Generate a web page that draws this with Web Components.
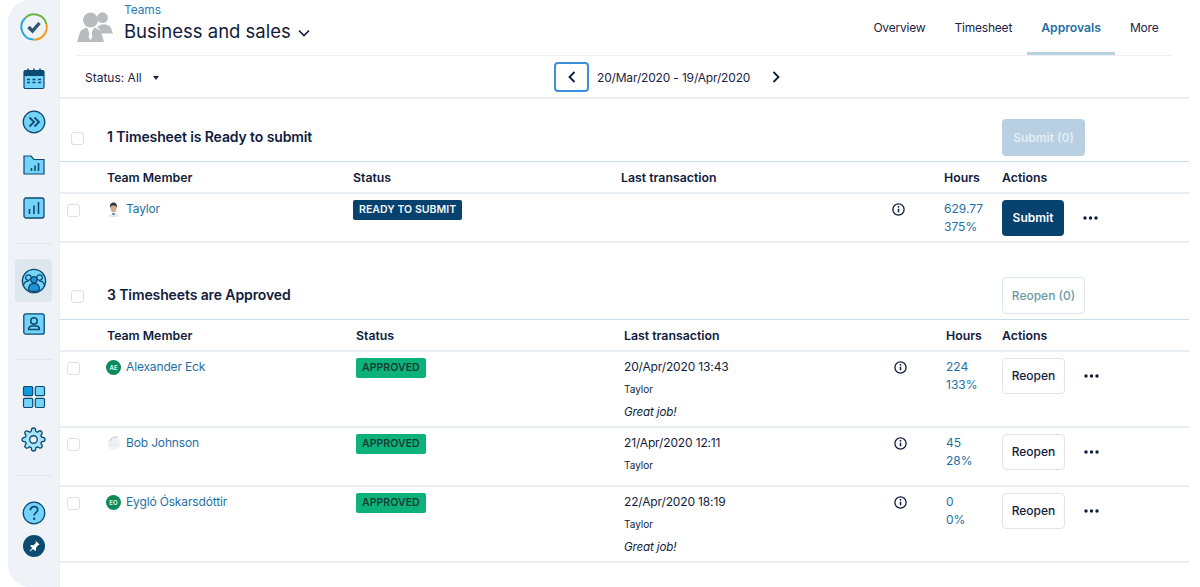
<!DOCTYPE html>
<html>
<head>
<meta charset="utf-8">
<title>Approvals</title>
<style>
  html, body { margin: 0; background: #fff; }
  body { font-family: Inter, "Liberation Sans", sans-serif; color: #111c3d; height: 587px; overflow: hidden; }
  #app { display: flex; height: 587px; padding-left: 8px; box-sizing: border-box; }
</style>
</head>
<body>
<div id="app">
  <app-sidebar></app-sidebar>
  <app-main>
    <page-header></page-header>
    <filter-bar></filter-bar>
    <sheet-section first title="1 Timesheet is Ready to submit" action="Submit (0)" kind="submit-off" cols="246px 268px 271px 52px 58px 1fr">
      <sheet-row name="Taylor" avatar="taylor" status="READY TO SUBMIT" tone="navy" hours="629.77" pct="375%" action="Submit" primary></sheet-row>
    </sheet-section>
    <sheet-section title="3 Timesheets are Approved" action="Reopen (0)" kind="reopen-off" cols="249px 268px 270px 52px 56px 1fr">
      <sheet-row name="Alexander Eck" initials="AE" status="APPROVED" tone="green" date="20/Apr/2020 13:43" by="Taylor" note="Great job!" hours="224" pct="133%" action="Reopen"></sheet-row>
      <sheet-row name="Bob Johnson" avatar="bob" status="APPROVED" tone="green" date="21/Apr/2020 12:11" by="Taylor" hours="45" pct="28%" action="Reopen"></sheet-row>
      <sheet-row name="Eygló Óskarsdóttir" initials="EO" status="APPROVED" tone="green" date="22/Apr/2020 18:19" by="Taylor" note="Great job!" hours="0" pct="0%" action="Reopen"></sheet-row>
    </sheet-section>
  </app-main>
</div>
<script>
const INK = '#0b4a73';
const SKY = '#74d3f8';
const sideIcons = {
  logo: `<svg width="32" height="32" viewBox="0 0 32 32" fill="none">
    <path d="M4.200 20.500A12.600 12.600 0 0 1 7 7.200" stroke="#1ea7e0" stroke-width="2"/>
    <path d="M7 7.200A12.600 12.600 0 0 1 28.400 13" stroke="#6cb33f" stroke-width="2"/>
    <path d="M28.400 13A12.600 12.600 0 0 1 15 28.600" stroke="#f39a21" stroke-width="2"/>
    <path d="M15 28.600A12.600 12.600 0 0 1 4.200 20.500" stroke="#1ea7e0" stroke-width="2"/>
    <path d="M10.500 16l4 4 7-8" stroke="#2d566f" stroke-width="3.400"/></svg>`,
  calendar: `<svg width="24" height="24" viewBox="0 0 24 24"><rect x="2" y="3.500" width="20" height="18" rx="1.500" fill="${SKY}" stroke="${INK}" stroke-width="1.200"/><path d="M2 3.700h20V9H2z" fill="${INK}"/><path d="M6 1.500v3M12 1.500v3M18 1.500v3" stroke="${INK}" stroke-width="1.500"/><path d="M5 12.500h3M10.500 12.500h3M16 12.500h3M5 15.500h3M10.500 15.500h3M16 15.500h3" stroke="${INK}" stroke-width="1.500"/></svg>`,
  forward: `<svg width="24" height="24" viewBox="0 0 24 24" fill="none"><circle cx="12" cy="12" r="10.800" fill="${SKY}" stroke="${INK}" stroke-width="1.300"/><path d="M7.500 7.500l4.500 4.500-4.500 4.500M12.500 7.500l4.500 4.500-4.500 4.500" stroke="${INK}" stroke-width="1.800"/></svg>`,
  folder: `<svg width="24" height="24" viewBox="0 0 24 24"><path d="M2 3h7l3 3.500h10V21H2z" fill="${SKY}" stroke="${INK}" stroke-width="1.200"/><path d="M9.500 15v3M13 12.500V18M16.500 10v8" stroke="${INK}" stroke-width="1.600"/></svg>`,
  chart: `<svg width="24" height="24" viewBox="0 0 24 24"><rect x="2" y="2" width="20" height="20" rx="2" fill="${SKY}" stroke="${INK}" stroke-width="1.300"/><path d="M7.500 13v5M12 9.500V18M16.500 6v12" stroke="${INK}" stroke-width="1.600"/></svg>`,
  teams: `<svg width="26" height="26" viewBox="0 0 26 26"><circle cx="13" cy="13" r="11.600" fill="${SKY}" stroke="${INK}" stroke-width="1.400"/><circle cx="7.400" cy="9.600" r="2.700" fill="${SKY}" stroke="${INK}" stroke-width="1.200"/><circle cx="18.600" cy="9.600" r="2.700" fill="${SKY}" stroke="${INK}" stroke-width="1.200"/><path d="M2.600 17c.6-2.800 2.500-3.900 5-3.900M23.400 17c-.6-2.800-2.500-3.900-5-3.900" fill="none" stroke="${INK}" stroke-width="1.200"/><circle cx="13" cy="11.800" r="3.100" fill="#1d93d2" stroke="${INK}" stroke-width="1.200"/><path d="M7.400 22c0-4.400 2.400-6.600 5.600-6.600s5.600 2.200 5.600 6.600a11 11 0 0 1-11.200 0z" fill="#1d93d2" stroke="${INK}" stroke-width="1.200"/></svg>`,
  profile: `<svg width="24" height="24" viewBox="0 0 24 24"><rect x="1.800" y="1.800" width="20.400" height="20.400" rx="2" fill="${SKY}" stroke="${INK}" stroke-width="1.300"/><circle cx="12" cy="9" r="3.200" fill="none" stroke="${INK}" stroke-width="1.500"/><path d="M6.600 17.400c0-2.300 1.600-3.300 3-3.300h4.800c1.400 0 3 1 3 3.300z" fill="none" stroke="${INK}" stroke-width="1.500"/></svg>`,
  grid: `<svg width="24" height="24" viewBox="0 0 24 24" stroke="${INK}" stroke-width="1.200"><rect x="1.500" y="1.500" width="9.200" height="9.200" rx="1.200" fill="#0f9be0"/><rect x="13.300" y="1.500" width="9.200" height="9.200" rx="1.200" fill="${SKY}"/><rect x="1.500" y="13.300" width="9.200" height="9.200" rx="1.200" fill="${SKY}"/><rect x="13.300" y="13.300" width="9.200" height="9.200" rx="1.200" fill="${SKY}"/></svg>`,
  gear: `<svg width="25" height="25" viewBox="0 0 24 24" fill="#a9e3fa" stroke="${INK}" stroke-width="1.300"><path d="M19.400 15a1.650 1.650 0 0 0 .33 1.820l.06.06a2 2 0 0 1 0 2.830 2 2 0 0 1-2.830 0l-.06-.06a1.650 1.650 0 0 0-1.820-.33 1.650 1.650 0 0 0-1 1.510V21a2 2 0 0 1-2 2 2 2 0 0 1-2-2v-.09A1.650 1.650 0 0 0 9 19.400a1.650 1.650 0 0 0-1.820.33l-.06.06a2 2 0 0 1-2.830 0 2 2 0 0 1 0-2.830l.06-.06a1.650 1.650 0 0 0 .33-1.820 1.650 1.650 0 0 0-1.510-1H3a2 2 0 0 1-2-2 2 2 0 0 1 2-2h.09A1.650 1.650 0 0 0 4.600 9a1.650 1.650 0 0 0-.33-1.820l-.06-.06a2 2 0 0 1 0-2.830 2 2 0 0 1 2.830 0l.06.06a1.650 1.650 0 0 0 1.820.33H9a1.650 1.650 0 0 0 1-1.510V3a2 2 0 0 1 2-2 2 2 0 0 1 2 2v.09a1.650 1.650 0 0 0 1 1.510 1.650 1.650 0 0 0 1.820-.33l.06-.06a2 2 0 0 1 2.830 0 2 2 0 0 1 0 2.830l-.06.06a1.650 1.650 0 0 0-.33 1.820V9a1.650 1.650 0 0 0 1.510 1H21a2 2 0 0 1 2 2 2 2 0 0 1-2 2h-.09a1.650 1.650 0 0 0-1.510 1z"/><circle cx="12" cy="12" r="3.600" fill="#eff3f7"/></svg>`,
  help: `<svg width="24" height="24" viewBox="0 0 24 24" fill="none"><circle cx="12" cy="12" r="10.800" fill="${SKY}" stroke="${INK}" stroke-width="1.300"/><path d="M8.400 9.200c0-2.200 1.600-3.600 3.700-3.600s3.600 1.300 3.600 3.200c0 2.800-3.600 2.900-3.600 5.800" stroke="${INK}" stroke-width="1.700"/><circle cx="12.100" cy="17.800" r="1.200" fill="${INK}"/></svg>`,
  pin: `<svg width="22" height="22" viewBox="0 0 22 22"><circle cx="11" cy="11" r="11" fill="#0d4a70"/><path d="M12.400 5.400l4.200 4.200-1.200.5-2.400 2.600.1 2.400-1 1-2-2.200-2.900 2.700-.6-.6 2.700-2.900-2.200-2 1-1 2.400.1 2.600-2.400z" fill="#fff"/></svg>`
};

class AppSidebar extends HTMLElement {
  constructor() {
    super();
    this.attachShadow({ mode: 'open' });
    const item = (n, cls = '') => `<div class="item ${cls}">${sideIcons[n]}</div>`;
    this.shadowRoot.innerHTML = `
      <style>
        :host { display: flex; flex-direction: column; align-items: center; width: 52px; height: 587px; flex: none; box-sizing: border-box;
          background: #eff3f7; border-radius: 22px 0 0 22px; border-right: 1px solid #e7ecf1; }
        .logo { height: 57px; display: flex; align-items: center; justify-content: center; flex: none; padding-bottom: 3px; box-sizing: border-box; }
        .item { height: 43px; width: 37px; display: flex; align-items: center; justify-content: center; flex: none; border-radius: 4px; }
        .active { background: #dfe7ee; }
        hr { width: 36px; height: 1px; border: 0; background: #e1e6eb; margin: 14px 0 15px; flex: none; }
        .pin { height: 24px; }
      </style>
      <div class="logo">${sideIcons.logo}</div>
      ${item('calendar')}${item('forward')}${item('folder')}${item('chart')}
      <hr>
      ${item('teams', 'active')}${item('profile')}
      <hr>
      ${item('grid')}${item('gear')}
      <hr>
      ${item('help')}${item('pin', 'pin')}
    `;
  }
}

class AppMain extends HTMLElement {
  constructor() {
    super();
    this.attachShadow({ mode: 'open' });
    this.shadowRoot.innerHTML = `
      <style>:host { display: block; width: 1129px; flex: none; }</style>
      <slot></slot>`;
  }
}

class PageHeader extends HTMLElement {
  constructor() {
    super();
    this.attachShadow({ mode: 'open' });
    const tabs = ['Overview', 'Timesheet', 'Approvals', 'More'];
    this.shadowRoot.innerHTML = `
      <style>
        :host { display: flex; height: 56px; box-sizing: border-box; margin: 0 17px 0 16px; border-bottom: 1px solid #eef1f4; }
        .team { display: flex; flex: 1; padding-left: 1px; }
        .group { margin: 12px 11px 0 0; flex: none; }
        .crumb { font-size: 12px; line-height: 14px; letter-spacing: -.1px; color: #2a7db5; margin-top: 3px; }
        .title { font-size: 18.500px; line-height: 24px; margin-top: 2px; display: flex; align-items: center; gap: 7px; color: #111c3d; }
        nav { display: flex; margin-right: -1px; }
        .tab { font-size: 12px; letter-spacing: -.2px; line-height: 55px; height: 55px; box-sizing: border-box; padding: 0 14.500px; color: #1a2444; }
        .on { color: #1f6fa6; font-size: 12.200px; letter-spacing: 0; font-weight: 600; border-bottom: 3px solid #b9d1e1; }
      </style>
      <div class="team">
        <svg class="group" width="36" height="30" viewBox="0 0 36 30" fill="#b9bcbf">
          <circle cx="25.500" cy="5.700" r="5.400"/><path d="M23 13c4-1.500 9-.5 11 3l2 5.500H24c-.5-3-1.500-5-4-6.500z"/>
          <circle cx="13.500" cy="8" r="7.500"/><path d="M0 30l3-10c1-2 4-3.500 7-4.500l3.500 8L17 15.500c3 1 6 2.500 7 4.500l3 10z"/>
          <path d="M12.300 18h2.400l-.3 2 1 5-1.900 3-1.900-3 1-5z" fill="#fff"/>
        </svg>
        <div>
          <div class="crumb">Teams</div>
          <div class="title">Business and sales
            <svg width="12" height="8" viewBox="0 0 12 8" fill="none" style="margin-top:4px"><path d="M1 1.500l5 5 5-5" stroke="#111c3d" stroke-width="1.600"/></svg>
          </div>
        </div>
      </div>
      <nav>${tabs.map(t => `<div class="tab ${t === 'Approvals' ? 'on' : ''}">${t}</div>`).join('')}</nav>
    `;
  }
}

class FilterBar extends HTMLElement {
  constructor() {
    super();
    this.attachShadow({ mode: 'open' });
    this.shadowRoot.innerHTML = `
      <style>
        :host { display: grid; grid-template-columns: 494px auto auto; align-items: center; height: 43px; box-sizing: border-box; border-bottom: 2px solid #e8edf2; }
        .status { display: flex; align-items: center; padding: 1px 0 0 25px; font-size: 12px; color: #1a2444; }
        .caret { width: 0; height: 0; margin-left: 11px; margin-top: 1px; border: 3px solid transparent; border-top: 4px solid #1a2444; border-bottom: 0; }
        .pager { display: flex; align-items: center; margin-top: 1px; }
        .prev { width: 35px; height: 30px; box-sizing: border-box; border: 2px solid #3d8fdc; border-radius: 4px; display: flex; align-items: center; justify-content: center; }
        .range { font-size: 12px; letter-spacing: -.17px; color: #1a2444; margin: 0 23px 0 8px; width: 152px; white-space: nowrap; }
      </style>
      <div class="status">Status: All<span class="caret"></span></div>
      <div class="pager">
        <div class="prev"><svg width="8" height="12" viewBox="0 0 8 12" fill="none"><path d="M6.500 1L1.500 6l5 5" stroke="#111c3d" stroke-width="1.800"/></svg></div>
        <div class="range">20/Mar/2020 - 19/Apr/2020</div>
        <svg width="8" height="12" viewBox="0 0 8 12" fill="none"><path d="M1.500 1l5 5-5 5" stroke="#111c3d" stroke-width="1.800"/></svg>
      </div>
    `;
  }
}

class SheetSection extends HTMLElement {
  constructor() {
    super();
    this.attachShadow({ mode: 'open' });
  }
  connectedCallback() {
    const cols = this.getAttribute('cols');
    const first = this.hasAttribute('first');
    const names = ['Team Member', 'Status', 'Last transaction', '', 'Hours', 'Actions'];
    this.style.setProperty('--cols', '47px ' + cols);
    this.shadowRoot.innerHTML = `
      <style>
        :host { display: block; }
        .top { display: flex; align-items: center; height: ${first ? 63 : 77}px; box-sizing: border-box; padding: ${first ? 20 : 34}px 104px 6px 11px; border-bottom: 1px solid #c9dce9; }
        .box { width: 13px; height: 13px; box-sizing: border-box; border: 1.500px solid #dcdfe3; border-radius: 3px; margin: 3px 23px 0 0; flex: none; background: #fff; }
        h2 { flex: 1; margin: 0 0 2px; font-size: 14px; font-weight: 600; letter-spacing: -.11px; color: #111c3d; }
        .btn { width: 83px; height: 37px; box-sizing: border-box; border-radius: 4px; font-size: 12px; font-weight: 500; display: flex; align-items: center; justify-content: center; }
        .submit-off { background: #b8d0e2; color: #e3edf4; font-weight: 600; }
        .reopen-off { background: #fff; border: 1px solid #dfe4e8; color: #6b9aa5; }
        .heads { display: grid; grid-template-columns: 47px ${cols}; height: 32px; box-sizing: border-box; align-items: center; border-bottom: 2px solid #e8edf2; font-size: 12.300px; font-weight: 600; color: #111c3d; }
      </style>
      <div class="top">
        <span class="box"></span>
        <h2>${this.getAttribute('title')}</h2>
        <div class="btn ${this.getAttribute('kind')}">${this.getAttribute('action')}</div>
      </div>
      <div class="heads"><span></span>${names.map(n => `<span>${n}</span>`).join('')}</div>
      <slot></slot>
    `;
    this.removeAttribute('title');
  }
}

const avatars = {
  taylor: `<svg width="11" height="15" viewBox="0 0 11 15"><path d="M1 15c0-3 1.500-4 4.500-4s4.500 1 4.500 4z" fill="#e9e9ea"/><ellipse cx="5.500" cy="6" rx="3" ry="4.200" fill="#dca88c"/><path d="M2 6C1.500 2 3.500.5 5.500.5S9.500 2 9 6C8.500 4 7 3.500 5.500 3.500S2.500 4 2 6z" fill="#33363c"/><path d="M4.500 11h2v2h-2z" fill="#2f7c8f"/></svg>`,
  bob: `<svg width="14" height="15" viewBox="0 0 14 15"><circle cx="7" cy="7.500" r="6.500" fill="#f0f1f4"/><path d="M3 5c1-3 4-4.500 8-4" stroke="#b8c3df" fill="none"/><path d="M4 9c2-1 4-1 5 1" stroke="#dde0e5" fill="none"/></svg>`
};

class SheetRow extends HTMLElement {
  constructor() {
    super();
    this.attachShadow({ mode: 'open' });
  }
  connectedCallback() {
    const a = n => this.getAttribute(n);
    const pic = a('initials')
      ? `<span class="ini">${a('initials')}</span>`
      : `<span class="pic">${avatars[a('avatar')]}</span>`;
    const date = a('date');
    this.shadowRoot.innerHTML = `
      <style>
        :host { display: block; }
        .row { display: grid; grid-template-columns: var(--cols); min-height: ${date ? 59 : 49}px; box-sizing: border-box; padding: 6px 0 5px; border-bottom: 2px solid #e8edf2; font-size: 12px; line-height: 18px; align-items: start; }
        .box { width: 13px; height: 13px; box-sizing: border-box; border: 1.500px solid #dcdfe3; border-radius: 3px; margin: 3.500px 0 0 7px; background: #fff; }
        .who { display: flex; align-items: center; margin-left: -1px; letter-spacing: -.15px; color: #1f6fa6; }
        .ini { width: 15px; height: 15px; border-radius: 50%; background: #0c8a5b; color: #dff3ea; font-size: 6px; font-weight: 700; line-height: 15px; text-align: center; margin-right: 5px; flex: none; letter-spacing: 0; }
        .pic { width: 15px; height: 15px; display: flex; justify-content: center; margin-right: 5px; flex: none; }
        .cell { display: flex; }
        .tag { height: 20px; line-height: 20px; padding: 0 6px; font-size: 10.500px; font-weight: 600; letter-spacing: .05px; border-radius: 2px; }
        .navy { background: #07426e; color: #f2f6f9; }
        .green { background: #0db27a; color: #173b36; }
        .when { color: #111c3d; letter-spacing: -.15px; }
        .by { font-size: 10px; letter-spacing: 0; margin-top: 4px; }
        .note { font-style: italic; font-size: 11.600px; margin-top: 5px; }
        .info { display: block; margin-top: 2.500px; }
        .hrs { color: #1f6fa6; }
        .acts { display: flex; align-items: center; gap: 19px; }
        .btn { height: 36px; box-sizing: border-box; border-radius: 4px; display: flex; align-items: center; justify-content: center; font-weight: 500; }
        .primary { width: 62px; background: #07426e; color: #fff; font-weight: 600; }
        .plain { width: 63px; background: #fff; border: 1px solid #e1e5e9; color: #111c3d; }
      </style>
      <div class="row">
        <span class="box"></span>
        <div class="who">${pic}${a('name')}</div>
        <div class="cell"><span class="tag ${a('tone')}">${a('status')}</span></div>
        <div class="when">${date ? `<div>${date}</div><div class="by">${a('by')}</div>` : ''}${a('note') ? `<div class="note">${a('note')}</div>` : ''}</div>
        <svg class="info" width="13" height="13" viewBox="0 0 13 13" fill="none"><circle cx="6.500" cy="6.500" r="5.600" stroke="#111c3d" stroke-width="1.300"/><path d="M6.500 5.700v3.600" stroke="#111c3d" stroke-width="1.500"/><circle cx="6.500" cy="3.800" r=".9" fill="#111c3d"/></svg>
        <div class="hrs">${a('hours')}<br>${a('pct')}</div>
        <div class="acts">
          <div class="btn ${this.hasAttribute('primary') ? 'primary' : 'plain'}">${a('action')}</div>
          <svg width="15" height="4" viewBox="0 0 15 4" fill="#111c3d"><circle cx="2" cy="2" r="1.700"/><circle cx="7.500" cy="2" r="1.700"/><circle cx="13" cy="2" r="1.700"/></svg>
        </div>
      </div>
    `;
  }
}

customElements.define('app-sidebar', AppSidebar);
customElements.define('app-main', AppMain);
customElements.define('page-header', PageHeader);
customElements.define('filter-bar', FilterBar);
customElements.define('sheet-section', SheetSection);
customElements.define('sheet-row', SheetRow);
</script>
</body>
</html>
